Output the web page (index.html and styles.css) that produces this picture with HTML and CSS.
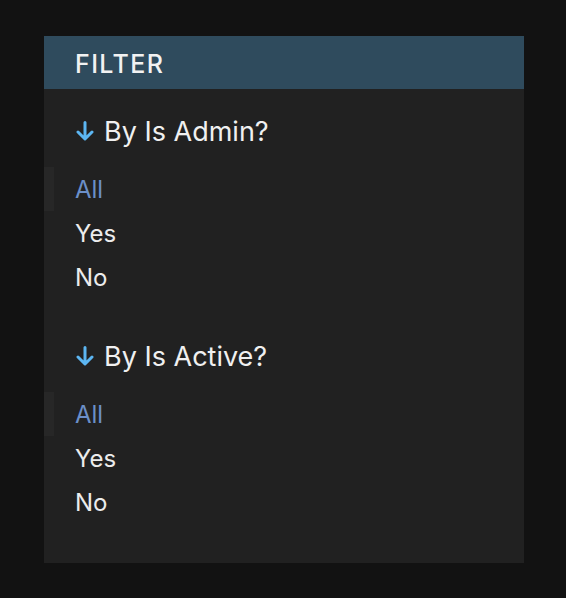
FILE: index.html
```html
<!DOCTYPE html>
<html>
<head>
<meta charset="utf-8">
<link rel="stylesheet" href="styles.css">
</head>
<body>
<div class="panel">
  <div class="panel-header">FILTER</div>
  <div class="section">
    <div class="section-title">
      <svg class="arrow" viewBox="0 0 18 20" width="18" height="20"><path d="M9 1.5V17.5M2 11l7 7 7-7" fill="none" stroke="#5cb6f2" stroke-width="3" stroke-linecap="round" stroke-linejoin="round"/></svg>
      <span>By Is Admin?</span>
    </div>
    <ul class="options">
      <li class="option selected">All</li>
      <li class="option">Yes</li>
      <li class="option">No</li>
    </ul>
  </div>
  <div class="section">
    <div class="section-title">
      <svg class="arrow" viewBox="0 0 18 20" width="18" height="20"><path d="M9 1.5V17.5M2 11l7 7 7-7" fill="none" stroke="#5cb6f2" stroke-width="3" stroke-linecap="round" stroke-linejoin="round"/></svg>
      <span>By Is Active?</span>
    </div>
    <ul class="options">
      <li class="option selected">All</li>
      <li class="option">Yes</li>
      <li class="option">No</li>
    </ul>
  </div>
</div>
</body>
</html>
```
FILE: styles.css
```css
html, body {
  margin: 0;
  padding: 0;
  background: #121212;
}
body {
  padding: 36px 42px 35px 44px;
  font-family: Inter, "Noto Sans", sans-serif;
}
.panel {
  width: 480px;
  background: #212121;
  padding-bottom: 39px;
}
.panel-header {
  box-sizing: border-box;
  height: 53px;
  padding-top: 2px;
  background: #2f4b5d;
  color: #f2f2f2;
  font-size: 25px;
  font-weight: 500;
  letter-spacing: 1.4px;
  padding-left: 31px;
  display: flex;
  align-items: center;
}
.section {
  padding-top: 24px;
}
.section + .section {
  padding-top: 39px;
}
.section-title {
  height: 36px;
  display: flex;
  align-items: center;
  gap: 10px;
  padding-left: 32px;
  color: #f0f0f0;
  font-size: 27px;
}
.arrow {
  display: block;
}
.options {
  list-style: none;
  margin: 18px 0 0 0;
  padding: 0;
}
.option {
  height: 44px;
  display: flex;
  align-items: center;
  padding-left: 31px;
  color: #ececec;
  font-size: 24px;
}
.option.selected {
  color: #6b8fc8;
  background: linear-gradient(to right, #272727 0, #272727 10px, transparent 10px);
}
```
